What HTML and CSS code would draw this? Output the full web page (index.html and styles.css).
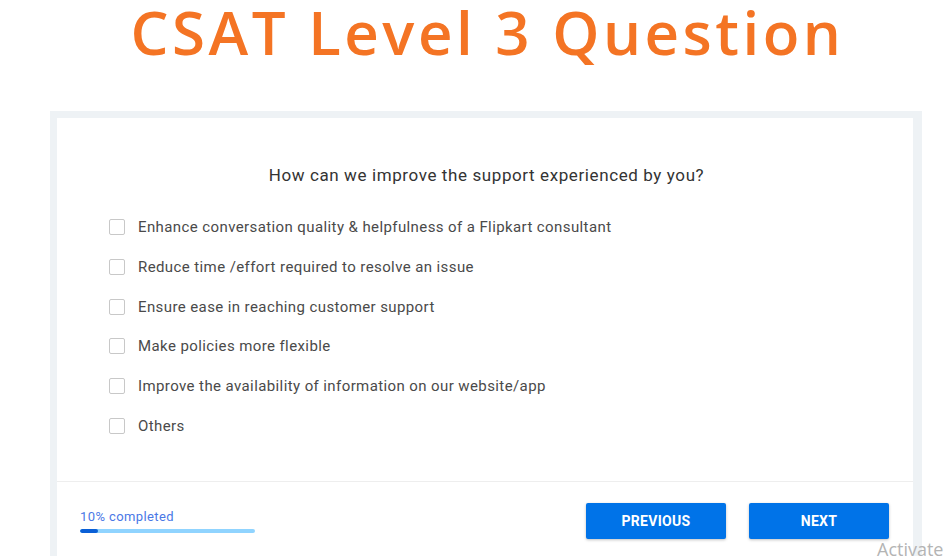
FILE: index.html
```html
<!DOCTYPE html>
<html>
<head>
<meta charset="utf-8">
<link rel="stylesheet" href="styles.css">
</head>
<body>
<h1 class="title">CSAT Level 3 Question</h1>
<div class="panel">
  <div class="card">
    <div class="body">
      <p class="question">How can we improve the support experienced by you?</p>
      <ul class="options">
        <li><span class="box"></span>Enhance conversation quality &amp; helpfulness of a Flipkart consultant</li>
        <li><span class="box"></span>Reduce time /effort required to resolve an issue</li>
        <li><span class="box"></span>Ensure ease in reaching customer support</li>
        <li><span class="box"></span>Make policies more flexible</li>
        <li><span class="box"></span>Improve the availability of information on our website/app</li>
        <li><span class="box"></span>Others</li>
      </ul>
    </div>
    <div class="footer">
      <div class="progress">
        <div class="progress-label">10% completed</div>
        <div class="track"><div class="fill" style="width:10%"></div></div>
      </div>
      <div class="buttons">
        <button class="btn">PREVIOUS</button>
        <button class="btn">NEXT</button>
      </div>
    </div>
  </div>
</div>
<div class="watermark">Activate</div>
</body>
</html>
```
FILE: styles.css
```css
html, body {
  margin: 0;
  padding: 0;
  background: #ffffff;
  overflow: hidden;
}
body {
  width: 949px;
  height: 556px;
  position: relative;
  font-family: Roboto, "Liberation Sans", sans-serif;
}
.title {
  margin: 0;
  height: 111px;
  box-sizing: border-box;
  padding-top: 1px;
  padding-left: 26px;
  text-align: center;
  font-family: "Open Sans", "Noto Sans", sans-serif;
  font-weight: 600;
  font-size: 60px;
  line-height: 62px;
  color: #f47424;
  letter-spacing: 3.5px;
  white-space: nowrap;
}
.panel {
  margin-left: 50px;
  width: 872px;
  height: 460px;
  background: #eef2f5;
  padding: 7px 9px 0 7px;
  box-sizing: border-box;
}
.card {
  background: #ffffff;
  height: 100%;
  display: flex;
  flex-direction: column;
}
.body {
  height: 364px;
  box-sizing: border-box;
  padding-top: 47px;
  border-bottom: 1px solid #eeeeee;
}
.question {
  margin: 0;
  text-align: center;
  font-size: 17px;
  line-height: 20px;
  letter-spacing: 0.6px;
  color: #333333;
  padding-left: 3px;
}
.options {
  list-style: none;
  margin: 32px 0 0 0;
  padding: 0 0 0 52px;
  display: flex;
  flex-direction: column;
  gap: 19.8px;
}
.options li {
  display: flex;
  align-items: center;
  height: 20px;
  font-size: 15px;
  letter-spacing: 0.4px;
  color: #4a4a4a;
}
.box {
  width: 14px;
  height: 14px;
  border: 1px solid #c8c8c8;
  border-radius: 2px;
  margin-right: 13px;
  flex: none;
}
.footer {
  display: flex;
  justify-content: space-between;
  padding: 21px 24px 0 23px;
}
.progress {
  padding-top: 6px;
}
.progress-label {
  font-size: 13px;
  line-height: 16px;
  letter-spacing: 0.4px;
  color: #4a78e6;
}
.track {
  margin-top: 4px;
  width: 175px;
  height: 4px;
  border-radius: 2px;
  background: #90d4ff;
  overflow: hidden;
}
.fill {
  height: 100%;
  background: #0a5fd6;
  border-radius: 2px;
}
.buttons {
  display: flex;
  gap: 23px;
}
.btn {
  width: 140px;
  height: 36px;
  border: none;
  border-radius: 2px;
  background: #0073e8;
  color: #ffffff;
  font-family: Roboto, "Liberation Sans", sans-serif;
  font-weight: 700;
  font-size: 14px;
  letter-spacing: 0.3px;
  box-shadow: 0 1px 3px rgba(0, 0, 0, 0.25);
  padding: 0;
}
.watermark {
  position: absolute;
  left: 877px;
  top: 539px;
  font-family: "Open Sans", "Noto Sans", sans-serif;
  font-size: 18px;
  line-height: 20px;
  color: #b4b4b4;
  white-space: nowrap;
}
```
